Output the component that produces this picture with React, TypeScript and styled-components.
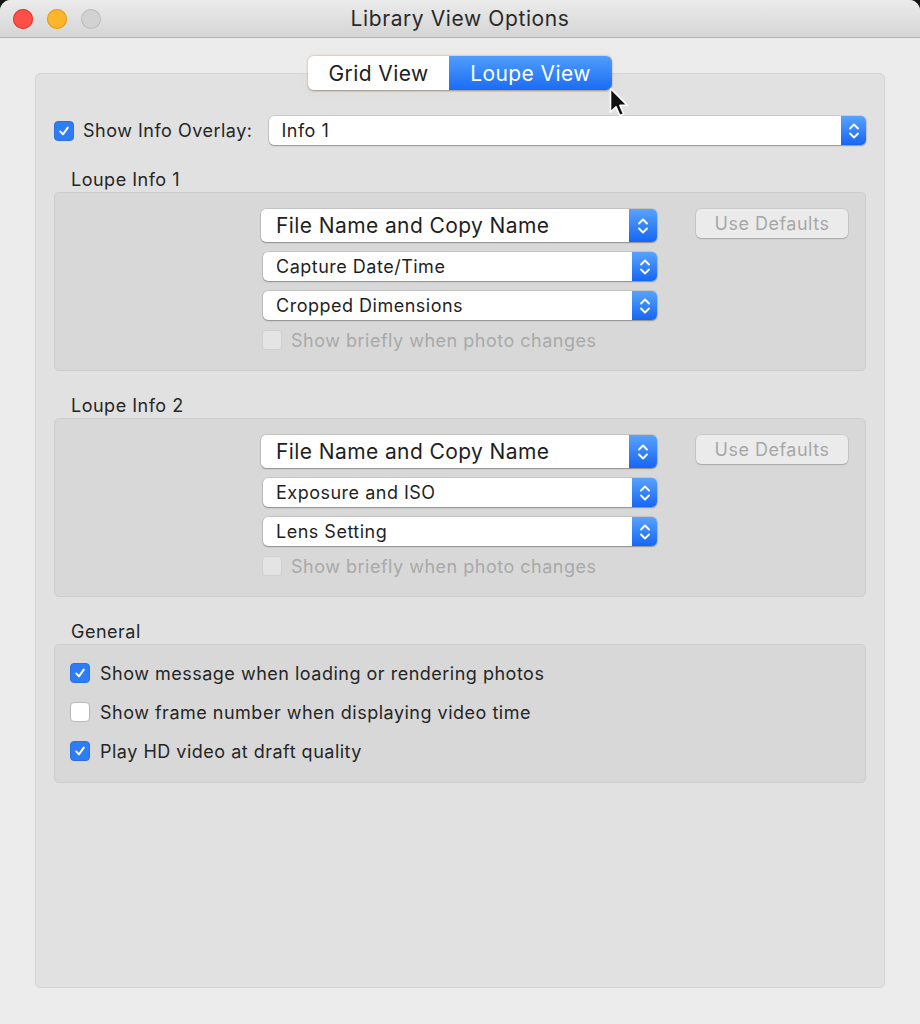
import React from 'react';
import styled, { createGlobalStyle } from 'styled-components';

const GlobalStyle = createGlobalStyle`
  html, body {
    margin: 0;
    padding: 0;
    background: #151515;
  }
  body {
    font-family: Inter, "Noto Sans", "Liberation Sans", sans-serif;
    color: #262626;
    letter-spacing: 0.5px;
    -webkit-font-smoothing: antialiased;
  }
`;

type PopupItem = { label: string; big?: boolean };

const loupeGroups: { title: string; items: PopupItem[] }[] = [
  {
    title: 'Loupe Info 1',
    items: [
      { label: 'File Name and Copy Name', big: true },
      { label: 'Capture Date/Time' },
      { label: 'Cropped Dimensions' },
    ],
  },
  {
    title: 'Loupe Info 2',
    items: [
      { label: 'File Name and Copy Name', big: true },
      { label: 'Exposure and ISO' },
      { label: 'Lens Setting' },
    ],
  },
];

const generalOptions = [
  { label: 'Show message when loading or rendering photos', checked: true },
  { label: 'Show frame number when displaying video time', checked: false },
  { label: 'Play HD video at draft quality', checked: true },
];

function Stepper() {
  return (
    <svg width="12" height="20" viewBox="0 0 12 20" fill="none">
      <path d="M2 7.5 L6 3.5 L10 7.5" stroke="white" strokeWidth="1.8" strokeLinecap="round" strokeLinejoin="round" />
      <path d="M2 12.5 L6 16.5 L10 12.5" stroke="white" strokeWidth="1.8" strokeLinecap="round" strokeLinejoin="round" />
    </svg>
  );
}

function Check() {
  return (
    <svg width="14" height="14" viewBox="0 0 14 14" fill="none">
      <path d="M3.2 7.4 L6 10.4 L10.8 3.6" stroke="white" strokeWidth="1.9" strokeLinecap="round" strokeLinejoin="round" />
    </svg>
  );
}

function Cursor() {
  return (
    <svg width="22" height="32" viewBox="0 0 22 32">
      <path
        d="M1.5 1.5 L1.5 25 L7 19.8 L10.8 28.6 L14.6 27 L10.9 18.4 L18.4 18.4 Z"
        fill="#111"
        stroke="white"
        strokeWidth="1.6"
        strokeLinejoin="round"
      />
    </svg>
  );
}

export default function App() {
  return (
    <>
      <GlobalStyle />
      <Window>
        <TitleBar>
          <Lights>
            <Light color="#fc4f47" border="#de3a33" />
            <Light color="#fdb62b" border="#df9c1d" />
            <Light color="#d2d2d2" border="#bdbdbd" />
          </Lights>
          <Title>Library View Options</Title>
        </TitleBar>
        <Body>
          <Tabs>
            <Tab>Grid View</Tab>
            <Tab active>Loupe View</Tab>
            <CursorSpot>
              <Cursor />
            </CursorSpot>
          </Tabs>
          <Panel>
            <OverlayRow>
              <CheckBox checked>
                <Check />
              </CheckBox>
              <OverlayLabel>Show Info Overlay:</OverlayLabel>
              <Popup wide>
                <PopupText>Info 1</PopupText>
                <StepperBox>
                  <Stepper />
                </StepperBox>
              </Popup>
            </OverlayRow>

            {loupeGroups.map((group) => (
              <Section key={group.title}>
                <SectionLabel>{group.title}</SectionLabel>
                <GroupBox>
                  <LoupeGrid>
                    <PopupColumn>
                      {group.items.map((item, i) => (
                        <Popup key={`${group.title}-${i}`} big={item.big}>
                          <PopupText big={item.big}>{item.label}</PopupText>
                          <StepperBox big={item.big}>
                            <Stepper />
                          </StepperBox>
                        </Popup>
                      ))}
                      <DisabledRow>
                        <CheckBox disabled />
                        <DisabledText>Show briefly when photo changes</DisabledText>
                      </DisabledRow>
                    </PopupColumn>
                    <DefaultsButton>Use Defaults</DefaultsButton>
                  </LoupeGrid>
                </GroupBox>
              </Section>
            ))}

            <Section>
              <SectionLabel>General</SectionLabel>
              <GroupBox>
                <OptionList>
                  {generalOptions.map((opt) => (
                    <OptionRow key={opt.label}>
                      <CheckBox checked={opt.checked}>{opt.checked && <Check />}</CheckBox>
                      <OptionText>{opt.label}</OptionText>
                    </OptionRow>
                  ))}
                </OptionList>
              </GroupBox>
            </Section>
          </Panel>
        </Body>
      </Window>
    </>
  );
}

const Window = styled.div`
  width: 920px;
  height: 1024px;
  display: flex;
  flex-direction: column;
  background: #ececec;
  border-radius: 11px 11px 0 0;
  overflow: hidden;
`;

const TitleBar = styled.div`
  height: 37px;
  flex-shrink: 0;
  position: relative;
  display: flex;
  align-items: center;
  justify-content: center;
  background: linear-gradient(#ebebeb, #d5d5d5);
  border-bottom: 1px solid #b4b4b4;
`;

const Lights = styled.div`
  position: absolute;
  left: 13px;
  top: 9px;
  display: flex;
  gap: 14px;
`;

const Light = styled.span<{ color: string; border: string }>`
  width: 20px;
  height: 20px;
  border-radius: 50%;
  background: ${({ color }) => color};
  box-shadow: inset 0 0 0 1px ${({ border }) => border};
`;

const Title = styled.div`
  font-size: 21px;
  color: #2a2a2a;
  letter-spacing: 0.6px;
`;

const Body = styled.div`
  flex: 1;
  display: flex;
  flex-direction: column;
  align-items: center;
  padding: 18px 35px 36px;
`;

const Tabs = styled.div`
  position: relative;
  z-index: 2;
  display: flex;
  height: 34px;
  margin-bottom: -17px;
  border-radius: 6px;
  box-shadow: 0 0.5px 2px rgba(0, 0, 0, 0.35), 0 0 8px rgba(255, 200, 140, 0.25);
`;

const Tab = styled.div<{ active?: boolean }>`
  display: flex;
  align-items: center;
  justify-content: center;
  font-size: 21px;
  letter-spacing: 0.4px;
  width: ${({ active }) => (active ? '163px' : '141px')};
  color: ${({ active }) => (active ? '#fff' : '#1e1e1e')};
  background: ${({ active }) => (active ? 'linear-gradient(#4f9dfd, #1b6cf4)' : '#fff')};
  border-radius: ${({ active }) => (active ? '0 6px 6px 0' : '6px 0 0 6px')};
`;

const CursorSpot = styled.div`
  position: absolute;
  left: 301px;
  top: 31px;
`;

const Panel = styled.div`
  align-self: stretch;
  flex: 1;
  display: flex;
  flex-direction: column;
  padding: 42px 18px 0;
  background: #e1e1e1;
  border: 1px solid #d4d4d4;
  border-radius: 5px;
`;

const OverlayRow = styled.div`
  display: flex;
  align-items: center;
  height: 29px;
`;

const OverlayLabel = styled.span`
  font-size: 18px;
  margin-left: 9px;
  margin-right: 14px;
  white-space: nowrap;
`;

const CheckBox = styled.span<{ checked?: boolean; disabled?: boolean }>`
  width: 20px;
  height: 20px;
  flex-shrink: 0;
  box-sizing: border-box;
  display: flex;
  align-items: center;
  justify-content: center;
  border-radius: 4px;
  background: ${({ checked, disabled }) => (checked ? '#2e7cf6' : disabled ? '#e4e4e4' : '#fff')};
  border: 1px solid ${({ checked, disabled }) => (checked ? '#2a70e0' : disabled ? '#cfcfcf' : '#b8b8b8')};
`;

const Popup = styled.div<{ wide?: boolean; big?: boolean }>`
  ${({ wide }) => (wide ? 'flex: 1;' : '')}
  height: ${({ big }) => (big ? '33px' : '29px')};
  ${({ big }) => (big ? '' : 'margin-left: 2px;')}
  display: flex;
  align-items: stretch;
  background: #fff;
  border-radius: 5px;
  box-shadow: 0 0 0 0.5px rgba(0, 0, 0, 0.18), 0 1px 1.5px rgba(0, 0, 0, 0.28);
  overflow: hidden;
`;

const PopupText = styled.span<{ big?: boolean }>`
  flex: 1;
  display: flex;
  align-items: center;
  padding-left: ${({ big }) => (big ? '15px' : '13px')};
  font-size: ${({ big }) => (big ? '21px' : '18px')};
  letter-spacing: ${({ big }) => (big ? '0.4px' : '0.5px')};
  color: #1f1f1f;
  white-space: nowrap;
`;

const StepperBox = styled.span<{ big?: boolean }>`
  width: ${({ big }) => (big ? '28px' : '25px')};
  display: flex;
  align-items: center;
  justify-content: center;
  background: linear-gradient(#58a3fd, #1666f4);
`;

const Section = styled.div`
  display: flex;
  flex-direction: column;
  margin-top: 24px;
`;

const SectionLabel = styled.div`
  font-size: 18px;
  line-height: 22px;
  padding-left: 17px;
  margin-bottom: 1px;
`;

const GroupBox = styled.div`
  background: #d8d8d8;
  border: 1px solid #cdcdcd;
  border-radius: 5px;
`;

const LoupeGrid = styled.div`
  display: grid;
  grid-template-columns: 396px 152px;
  justify-content: space-between;
  align-items: start;
  padding: 16px 17px 20px 206px;
`;

const PopupColumn = styled.div`
  display: flex;
  flex-direction: column;
  gap: 10px;
`;

const DisabledRow = styled.div`
  display: flex;
  align-items: center;
  gap: 9px;
  height: 20px;
  margin-left: 1px;
`;

const DisabledText = styled.span`
  font-size: 18px;
  color: #a9a9a9;
  white-space: nowrap;
`;

const DefaultsButton = styled.div`
  height: 29px;
  display: flex;
  align-items: center;
  justify-content: center;
  font-size: 18px;
  color: #a7a7a7;
  background: #ebebeb;
  border-radius: 5px;
  box-shadow: 0 0 0 0.5px rgba(0, 0, 0, 0.12), 0 1px 1.5px rgba(0, 0, 0, 0.18);
`;

const OptionList = styled.div`
  display: flex;
  flex-direction: column;
  gap: 19px;
  padding: 18px 15px 21px;
`;

const OptionRow = styled.div`
  display: flex;
  align-items: center;
  gap: 10px;
  height: 20px;
`;

const OptionText = styled.span`
  font-size: 18px;
  white-space: nowrap;
`;
